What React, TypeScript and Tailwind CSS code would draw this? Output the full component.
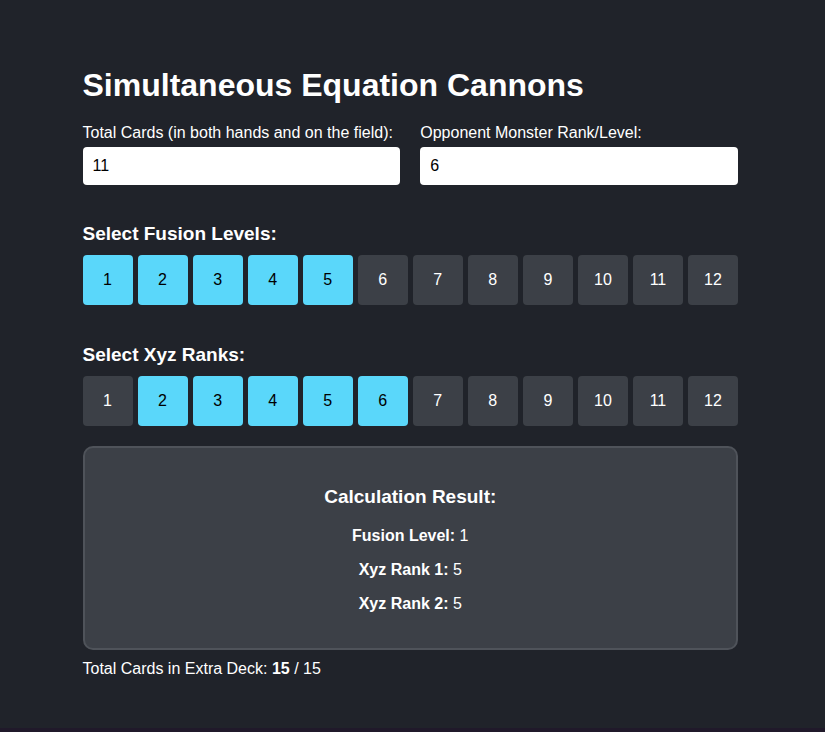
import { useState } from "react";

const LEVELS = [1, 2, 3, 4, 5, 6, 7, 8, 9, 10, 11, 12];

type PickerProps = {
  title: string;
  name: string;
  selected: number[];
  onToggle: (value: number) => void;
};

function Picker({ title, name, selected, onToggle }: PickerProps) {
  return (
    <section>
      <h2 className="mb-2 text-[19px] leading-[26px] font-bold">{title}</h2>
      <div className="grid grid-cols-12 gap-[5px]">
        {LEVELS.map((value) => {
          const active = selected.includes(value);
          return (
            <button
              key={value}
              type="button"
              aria-label={`${name} ${value}`}
              aria-pressed={active}
              onClick={() => onToggle(value)}
              className={
                active
                  ? "h-[50px] rounded bg-[#5ad7fa] text-black"
                  : "h-[50px] rounded bg-[#3c4047] text-white"
              }
            >
              {value}
            </button>
          );
        })}
      </div>
    </section>
  );
}

function ResultRow({ label, value }: { label: string; value: number }) {
  return (
    <p>
      <strong>{label}:</strong> {value}
    </p>
  );
}

const toggle = (list: number[], value: number) =>
  list.includes(value) ? list.filter((v) => v !== value) : [...list, value];

export default function App() {
  const [total, setTotal] = useState("11");
  const [opponent, setOpponent] = useState("6");
  const [fusion, setFusion] = useState([1, 2, 3, 4, 5]);
  const [xyz, setXyz] = useState([2, 3, 4, 5, 6]);

  return (
    <div className="min-h-screen border-b-4 border-[#20192a] bg-[#20232a] pt-[65px] pr-[87px] pb-10 pl-[10%] font-['Liberation_Sans',Arial,sans-serif] text-base leading-[18px] text-white">
      <main>
        <h1 className="mb-[19px] text-[32px] leading-10 font-bold">Simultaneous Equation Cannons</h1>
        <div className="grid grid-cols-2 gap-5">
          <div>
            <label htmlFor="total" className="mb-[5px] block">
              Total Cards (in both hands and on the field):
            </label>
            <input
              id="total"
              value={total}
              onChange={(e) => setTotal(e.target.value)}
              className="h-[38px] w-full rounded bg-white px-[10px] text-black"
            />
          </div>
          <div>
            <label htmlFor="opponent" className="mb-[5px] block">
              Opponent Monster Rank/Level:
            </label>
            <input
              id="opponent"
              value={opponent}
              onChange={(e) => setOpponent(e.target.value)}
              className="h-[38px] w-full rounded bg-white px-[10px] text-black"
            />
          </div>
        </div>
        <div className="mt-9 mb-5 flex flex-col gap-[37px]">
          <Picker
            title="Select Fusion Levels:"
            name="Fusion level"
            selected={fusion}
            onToggle={(v) => setFusion(toggle(fusion, v))}
          />
          <Picker
            title="Select Xyz Ranks:"
            name="Xyz rank"
            selected={xyz}
            onToggle={(v) => setXyz(toggle(xyz, v))}
          />
        </div>
        <section className="mb-[10px] rounded-[10px] border-2 border-[#4f535a] bg-[#3c4047] px-5 pt-9 pb-[35px] text-center">
          <h2 className="mb-[17px] text-[19px] leading-[26px] font-bold">Calculation Result:</h2>
          <div className="flex flex-col gap-4">
            <ResultRow label="Fusion Level" value={1} />
            <ResultRow label="Xyz Rank 1" value={5} />
            <ResultRow label="Xyz Rank 2" value={5} />
          </div>
        </section>
        <p>
          Total Cards in Extra Deck: <strong>{fusion.length + xyz.length + 5}</strong> / 15
        </p>
      </main>
    </div>
  );
}
